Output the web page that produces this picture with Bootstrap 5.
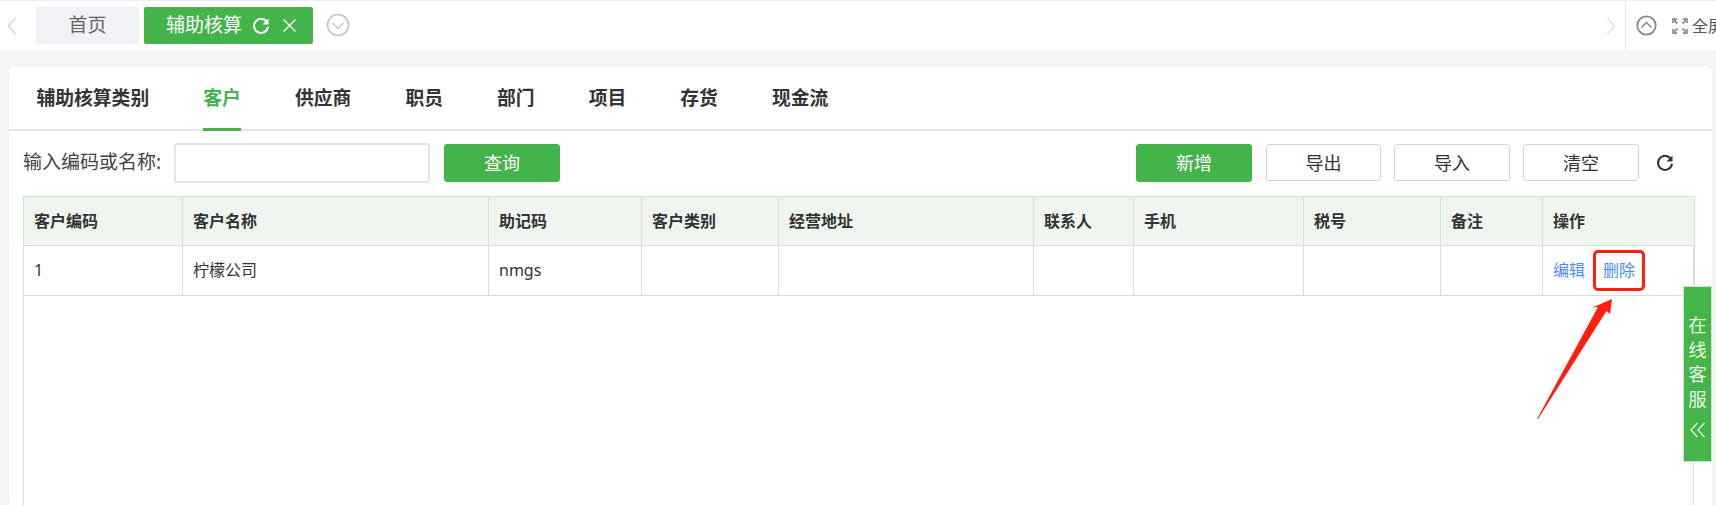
<!DOCTYPE html>
<html lang="zh-CN">
<head>
<meta charset="utf-8">
<title>辅助核算</title>
<link rel="stylesheet" href="https://cdn.jsdelivr.net/npm/bootstrap@5.3.0/dist/css/bootstrap.min.css">
<style>
html,body{height:505px;overflow:hidden}
body{background:#f5f5f5;font-family:"Noto Sans","Noto Sans CJK SC","Liberation Sans",sans-serif;color:#333;position:relative}
.topbar{height:50px;background:#fff;border-top:1px solid #eee;padding-top:6px}
.nav-arrow{width:36px;flex:none;padding-left:7px;height:37px}
.page-tab{height:37px;border-radius:2px;font-size:19px;line-height:37px;flex:none}
.page-home{width:103px;background:#f0f2f7;color:#666;text-align:center;margin-right:5px}
.page-active{width:169px;background:#43b44a;color:#fff;padding-left:22px}
.tab-round{margin-left:13px;flex:none}
.right-tools{width:91px;flex:none;border-left:1px solid #e6e6e6;height:49px;margin-top:-6px;overflow:hidden;white-space:nowrap;padding-left:10px;font-size:16px;color:#555}
.panel{position:absolute;left:9px;top:66px;width:1703px;height:439px;background:#fff;border-radius:6px 6px 0 0;box-shadow:0 0 4px rgba(0,0,0,.04);overflow:hidden}
.subtabs{height:65px;border-bottom:2px solid #e4e8ee;padding-left:27.5px;gap:54.1px}
.subtab{height:65px;line-height:65px;font-size:18.8px;font-weight:700;color:#333;margin-bottom:-2px;text-decoration:none}
.subtab-on{color:#43b44a;border-bottom:3px solid #43b44a}
.toolbar{height:66px;padding:12px 0 0 14px}
.search-label{font-size:19px;width:151px;flex:none;color:#444}
.search-input{width:256px;height:40px;flex:none;border:2px solid #e3e5ec;border-radius:3px;margin-right:14px;background:#fff}
.act{width:116px;height:38px;padding:0;font-size:18px;line-height:36px;border-radius:3px;flex:none}
.act-green,.act-green:hover{background:#43b44a;border-color:#43b44a;color:#fff}
.act-plain,.act-plain:hover{background:#fff;border:1px solid #d4d4d4;color:#333;height:37px;margin-top:1px}
.act-gap{margin-right:13px}
.act-export{width:115px;margin-left:1px}
.reload-tool{margin:0 0 0 17px;flex:none}
.grid-box{position:absolute;left:14px;top:130px;width:1671px;height:309px;border:1px solid #dcdcdc;border-width:0 1px}
.data-grid{table-layout:fixed;width:1671px;margin:0 0 0 -1px;border-collapse:collapse;font-size:16px;color:#333}
.data-grid th,.data-grid td{border:1px solid #dcdcdc;padding:0 10px;vertical-align:middle;box-shadow:none}
.data-grid th{height:49px;background:#eff6f0;font-weight:700;color:#333}
.data-grid td{height:50px;padding-bottom:2px}
.w1{width:159px}.w2{width:306px}.w3{width:153px}.w4{width:137px}.w5{width:255px}.w6{width:100px}.w7{width:170px}.w8{width:137px}.w9{width:102px}.w10{width:152px}
.row-link{color:#4a8cff;text-decoration:none;margin-right:18px}
.redbox{position:absolute;left:1593px;top:250px;width:52px;height:41px;border:3px solid #ff1f0f;border-radius:5px}
.arrow-mark{position:absolute;left:1530px;top:295px}
.service{position:absolute;left:1683px;top:286px;width:29px;height:176px;background:#44b549;border:1px solid #cfe3d0;color:#e6f3e6;font-size:18.5px;line-height:24.6px;text-align:center;padding-top:26px}
.service svg{display:block;margin:11px auto 0}
</style>
</head>
<body>
<div class="topbar d-flex align-items-start">
  <div class="nav-arrow d-flex align-items-center"><svg width="10" height="18" viewBox="0 0 10 18"><path d="M8.5 1 1.5 9l7 8" fill="none" stroke="#d8d8d8" stroke-width="1.5"/></svg></div>
  <div class="page-tab page-home">首页</div>
  <div class="page-tab page-active d-flex align-items-center">辅助核算
    <svg style="margin-left:10px" width="18" height="18" viewBox="0 0 18 18"><path d="M15 5.2A7 7 0 1 0 16 9.6" fill="none" stroke="#fff" stroke-width="2"/><path d="M16.5 1.5v6h-6z" fill="#fff"/></svg>
    <svg style="margin-left:12px" width="15" height="15" viewBox="0 0 15 15"><path d="M1.5 1.5l12 12M13.5 1.500l-12 12" stroke="#fff" stroke-width="1.4"/></svg>
  </div>
  <svg class="tab-round" width="24" height="24" viewBox="0 0 24 24" style="margin-top:6px"><circle cx="12" cy="12" r="10.5" fill="none" stroke="#c4c4c4" stroke-width="1.6"/><path d="M6.5 10 12 15.5 17.5 10" fill="none" stroke="#c4c4c4" stroke-width="1.5"/></svg>
  <div class="flex-grow-1"></div>
  <div class="d-flex align-items-center" style="height:37px;margin-right:9px"><svg width="10" height="18" viewBox="0 0 10 18"><path d="M1.5 1l7 8-7 8" fill="none" stroke="#e0e0e0" stroke-width="1.5"/></svg></div>
  <div class="right-tools d-flex align-items-center">
    <svg class="flex-shrink-0" width="21" height="21" viewBox="0 0 21 21"><circle cx="10.500" cy="10.500" r="9.200" fill="none" stroke="#8a8a8a" stroke-width="1.800"/><path d="M5.500 12.500 10.500 7.500l5 5" fill="none" stroke="#8a8a8a" stroke-width="1.500"/></svg>
    <svg class="flex-shrink-0" style="margin-left:15px" width="16" height="16" viewBox="0 0 16 16"><g fill="none" stroke="#999" stroke-width="1.800"><path d="M1 5V1h4M11 1h4v4M15 11v4h-4M5 15H1v-4M2 2l3.500 3.500M14 2l-3.500 3.500M14 14l-3.500-3.500M2 14l3.500-3.500"/></g></svg>
    <span class="flex-shrink-0" style="margin-left:4px">全屏</span>
  </div>
</div>
<div class="panel">
  <div class="subtabs d-flex">
    <a class="subtab" href="#">辅助核算类别</a>
    <a class="subtab subtab-on" href="#">客户</a>
    <a class="subtab" href="#">供应商</a>
    <a class="subtab" href="#">职员</a>
    <a class="subtab" href="#">部门</a>
    <a class="subtab" href="#">项目</a>
    <a class="subtab" href="#">存货</a>
    <a class="subtab" href="#">现金流</a>
  </div>
  <div class="toolbar d-flex align-items-start">
    <div class="search-label d-flex align-items-center" style="height:39px">输入编码或名称:</div>
    <input class="search-input" type="text">
    <button class="btn act act-green" style="margin-top:1px">查询</button>
    <div class="flex-grow-1"></div>
    <button class="btn act act-green act-gap" style="margin-top:1px">新增</button>
    <button class="btn act act-plain act-export act-gap">导出</button>
    <button class="btn act act-plain act-gap">导入</button>
    <button class="btn act act-plain">清空</button>
    <svg class="reload-tool" style="margin-top:11px;margin-right:38px" width="18" height="18" viewBox="0 0 18 18"><path d="M15 5.200A7 7 0 1 0 16 9.600" fill="none" stroke="#333" stroke-width="2"/><path d="M16.500 1.500v6h-6z" fill="#333"/></svg>
  </div>
  <div class="grid-box">
    <table class="table data-grid mb-0">
      <colgroup><col class="w1"><col class="w2"><col class="w3"><col class="w4"><col class="w5"><col class="w6"><col class="w7"><col class="w8"><col class="w9"><col class="w10"></colgroup>
      <thead><tr><th>客户编码</th><th>客户名称</th><th>助记码</th><th>客户类别</th><th>经营地址</th><th>联系人</th><th>手机</th><th>税号</th><th>备注</th><th>操作</th></tr></thead>
      <tbody><tr><td>1</td><td>柠檬公司</td><td>nmgs</td><td></td><td></td><td></td><td></td><td></td><td></td><td><a class="row-link" href="#">编辑</a><a class="row-link" href="#">删除</a></td></tr></tbody>
    </table>
  </div>
</div>
<div class="redbox"></div>
<svg class="arrow-mark" width="90" height="130" viewBox="0 0 90 130"><path d="M82 4 80 19 76.500 16 8 124 7 124 68 12 62.500 12.500z" fill="#ff1f0f"/></svg>
<div class="service">在<br>线<br>客<br>服<svg width="16" height="16" viewBox="0 0 16 16"><path d="M7.500 1 1 8l6.500 7M14.500 1 8 8l6.500 7" fill="none" stroke="#e6f3e6" stroke-width="1.300"/></svg></div>
<script src="https://cdn.jsdelivr.net/npm/bootstrap@5.3.0/dist/js/bootstrap.bundle.min.js"></script>
</body>
</html>
